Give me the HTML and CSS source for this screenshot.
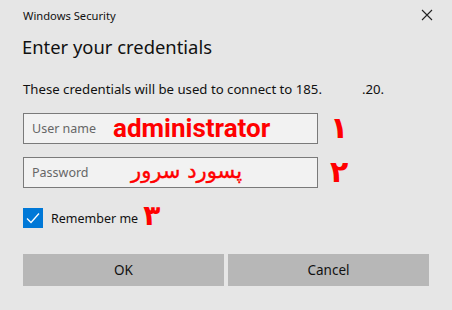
FILE: index.html
```html
<!DOCTYPE html>
<html>
<head>
<meta charset="utf-8">
<link rel="stylesheet" href="styles.css">
</head>
<body>
<div class="dialog">
  <div class="titlebar">
    <span class="app">Windows Security</span>
    <svg class="close" width="12" height="12" viewBox="0 0 12 12"><path d="M1 1 L11 11 M11 1 L1 11" stroke="#222" stroke-width="1.1" fill="none"/></svg>
  </div>
  <h1 class="heading">Enter your credentials</h1>
  <p class="info">These credentials will be used to connect to 185.<span class="gap"></span>.20.</p>
  <div class="row">
    <div class="field"><span class="ph">User name</span><span class="note latin">administrator</span></div>
    <span class="num">۱</span>
  </div>
  <div class="row">
    <div class="field"><span class="ph">Password</span><span class="note fa" dir="rtl">پسورد سرور</span></div>
    <span class="num">۲</span>
  </div>
  <div class="check-row">
    <span class="box"><svg width="20" height="20" viewBox="0 0 20 20"><path d="M4 10.5 L8 14.5 L16 5.5" stroke="#fff" stroke-width="1.3" fill="none"/></svg></span>
    <span class="label">Remember me</span>
    <span class="num small">۳</span>
  </div>
  <div class="buttons">
    <div class="btn">OK</div>
    <div class="btn">Cancel</div>
  </div>
</div>
</body>
</html>
```
FILE: styles.css
```css
html, body {
  margin: 0;
  padding: 0;
  background: #e6e6e6;
}
.dialog {
  width: 452px;
  height: 310px;
  box-sizing: border-box;
  padding: 0 23px 0 23px;
  font-family: "Noto Sans", "Open Sans", sans-serif;
  color: #1a1a1a;
}
.titlebar {
  display: flex;
  justify-content: space-between;
  align-items: center;
  height: 30px;
}
.app {
  font-size: 11.2px;
  color: #111;
}
.close {
  margin-right: -4px;
}
.heading {
  margin: 4px 0 0 -1px;
  font-weight: normal;
  font-size: 18.4px;
  line-height: 26px;
  color: #111;
}
.info {
  margin: 20px 0 0 0;
  font-size: 13.2px;
  line-height: 18px;
  color: #111;
}
.gap {
  display: inline-block;
  width: 40px;
}
.row {
  display: flex;
  align-items: center;
  margin-top: 14px;
}
.row + .row {
  margin-top: 12px;
}
.field {
  width: 295px;
  height: 31px;
  box-sizing: border-box;
  border: 1px solid #7a7a7a;
  background: #f2f2f2;
  display: flex;
  align-items: center;
  padding-left: 8px;
  position: relative;
}
.ph {
  font-size: 12.5px;
  color: #666;
}
.note {
  position: absolute;
  color: #ff0000;
  font-weight: bold;
}
.latin {
  left: 89px;
  top: 0px;
  font-family: Roboto, "Liberation Sans", sans-serif;
  font-size: 26px;
  line-height: 28px;
}
.fa {
  left: 107px;
  top: -1px;
  font-family: "DejaVu Sans", sans-serif;
  font-size: 21px;
  font-weight: normal;
  line-height: 28px;
  -webkit-text-stroke: 0.4px #ff0000;
}
.num {
  color: #ff0000;
  font-family: "DejaVu Sans", sans-serif;
  font-weight: bold;
  font-size: 30px;
  line-height: 32px;
  margin-left: 12px;
}
.check-row {
  display: flex;
  align-items: center;
  margin-top: 20px;
}
.box {
  width: 20px;
  height: 20px;
  background: #0078d7;
  display: block;
}
.box svg {
  display: block;
}
.label {
  margin-left: 8px;
  font-size: 12.5px;
  color: #111;
}
.num.small {
  font-size: 28px;
  line-height: 24px;
  margin-left: 5px;
  margin-top: -4px;
}
.buttons {
  display: flex;
  gap: 4px;
  margin-top: 26px;
}
.btn {
  flex: 1;
  height: 32px;
  background: #b7b7b7;
  display: flex;
  align-items: center;
  justify-content: center;
  font-size: 13.5px;
  color: #111;
}
```
